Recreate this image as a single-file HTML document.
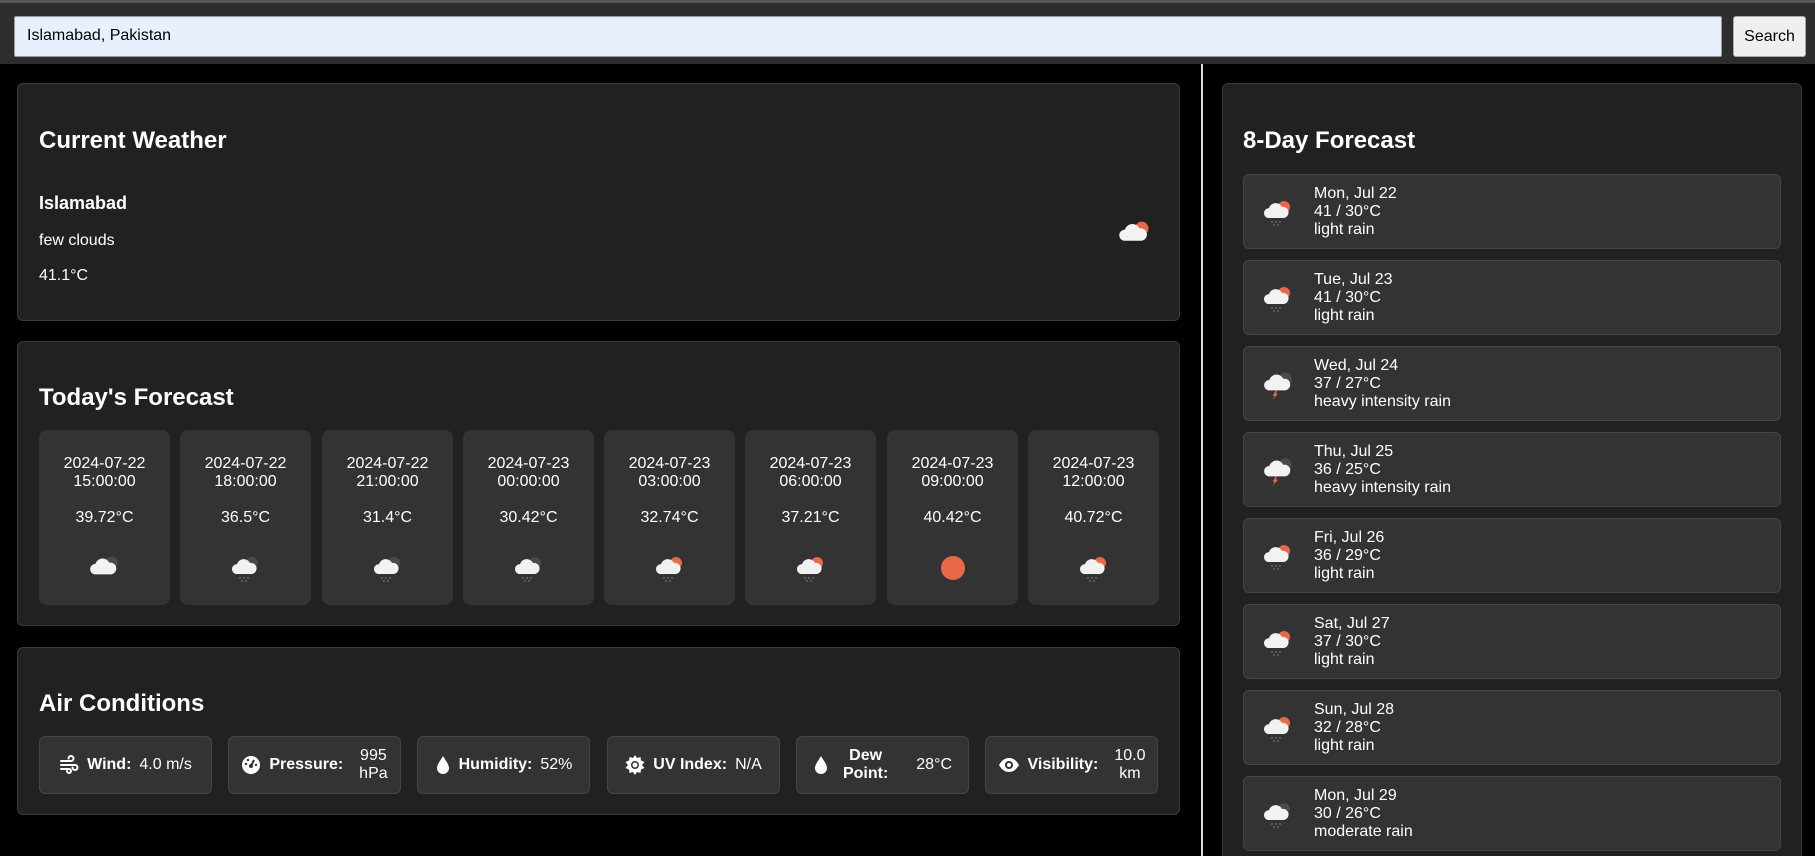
<!DOCTYPE html>
<html style="width:1815px;height:856px;overflow:hidden"><head><meta charset="utf-8">
<style>
*{box-sizing:border-box;margin:0;padding:0}
body{width:1815px;height:856px;background:#000;font-family:"Liberation Sans",Arial,sans-serif;color:#fff;position:relative;overflow:hidden;font-size:16px}
.top{position:absolute;left:0;top:0;width:1815px;height:64px;background:#2d2d2d;border-top:3px solid #555}
.inp{position:absolute;left:14px;top:13px;width:1708px;height:41px;background:#e8f0fe;border:1px solid #999;border-radius:2px;color:#000;font-size:16px;padding:10px 12px}
.btn{position:absolute;left:1733px;top:13px;width:73px;height:41px;background:#efefef;border:1px solid #aaa;border-radius:3px;color:#000;font-size:16px;text-align:center;line-height:39px}
.div{position:absolute;left:1201px;top:64px;width:2px;height:792px;background:#ddd}
.card{position:absolute;background:#212121;border:1px solid #3a3a3a;border-radius:6px}
h2{position:absolute;font-size:24px;font-weight:bold}
.hb{position:absolute;top:430px;width:131px;height:175px;background:#333;border-radius:8px;text-align:center;font-size:16px;line-height:18px}
.ab{position:absolute;top:736px;width:173px;height:58px;background:#333;border:1px solid #444;border-radius:6px;display:flex;align-items:center;justify-content:center;gap:8px;font-size:16px;line-height:18px}
.ab b{text-align:center}
.ab span{text-align:center}
.fi{position:absolute;left:1243px;width:538px;height:75px;background:#333;border:1px solid #444;border-radius:6px;font-size:16px;line-height:18px}
.fi .t{position:absolute;left:70px;top:10px}
.fi svg{position:absolute;left:18px;top:20px}
</style></head><body>
<svg width="0" height="0" style="position:absolute">
<defs>
<g id="cl"><path d="M6 22a5 5 0 0 1 1-9.9A7 7 0 0 1 20 11a5 5 0 0 1 2 11z" fill="#f2f2f2"/></g>
<g id="sun"><circle cx="22" cy="11" r="6" fill="#e8694a"/></g>
<g id="moon"><circle cx="22" cy="11" r="6" fill="#4a4a4a"/></g>
<g id="rain" fill="#666"><circle cx="10" cy="26" r="1"/><circle cx="14" cy="26" r="1"/><circle cx="18" cy="26" r="1"/><circle cx="12" cy="29" r="1"/><circle cx="16" cy="29" r="1"/></g>
</defs></svg>

<div class="top"><div class="inp">Islamabad, Pakistan</div><div class="btn">Search</div></div>
<div class="div"></div>

<div class="card" style="left:17px;top:83px;width:1163px;height:238px">
<h2 style="left:21px;top:43px">Current Weather</h2>
<div style="position:absolute;left:21px;top:109px;font-weight:bold;font-size:18px">Islamabad</div>
<div style="position:absolute;left:21px;top:148px">few clouds</div>
<div style="position:absolute;left:21px;top:183px">41.1°C</div>
<svg style="position:absolute;left:1099px;top:132px" width="36" height="36" viewBox="0 0 32 32"><use href="#sun"/><use href="#cl"/></svg>
</div>

<div class="card" style="left:17px;top:341px;width:1163px;height:285px">
<h2 style="left:21px;top:42px">Today's Forecast</h2>
</div>
<div class="hb" style="left:39px"><div style="margin-top:25px">2024-07-22<br>15:00:00</div><div style="margin-top:18px">39.72°C</div><svg style="margin-top:24px" width="36" height="34" viewBox="0 0 32 32"><use href="#moon"/><use href="#cl"/></svg></div>
<div class="hb" style="left:180px"><div style="margin-top:25px">2024-07-22<br>18:00:00</div><div style="margin-top:18px">36.5°C</div><svg style="margin-top:24px" width="32" height="34" viewBox="0 0 32 32"><use href="#moon"/><use href="#cl"/><use href="#rain"/></svg></div>
<div class="hb" style="left:322px"><div style="margin-top:25px">2024-07-22<br>21:00:00</div><div style="margin-top:18px">31.4°C</div><svg style="margin-top:24px" width="32" height="34" viewBox="0 0 32 32"><use href="#moon"/><use href="#cl"/><use href="#rain"/></svg></div>
<div class="hb" style="left:463px"><div style="margin-top:25px">2024-07-23<br>00:00:00</div><div style="margin-top:18px">30.42°C</div><svg style="margin-top:24px" width="32" height="34" viewBox="0 0 32 32"><use href="#moon"/><use href="#cl"/><use href="#rain"/></svg></div>
<div class="hb" style="left:604px"><div style="margin-top:25px">2024-07-23<br>03:00:00</div><div style="margin-top:18px">32.74°C</div><svg style="margin-top:24px" width="32" height="34" viewBox="0 0 32 32"><use href="#sun"/><use href="#cl"/><use href="#rain"/></svg></div>
<div class="hb" style="left:745px"><div style="margin-top:25px">2024-07-23<br>06:00:00</div><div style="margin-top:18px">37.21°C</div><svg style="margin-top:24px" width="32" height="34" viewBox="0 0 32 32"><use href="#sun"/><use href="#cl"/><use href="#rain"/></svg></div>
<div class="hb" style="left:887px"><div style="margin-top:25px">2024-07-23<br>09:00:00</div><div style="margin-top:18px">40.42°C</div><svg style="margin-top:26px" width="30" height="30" viewBox="0 0 30 30"><circle cx="15" cy="15" r="12" fill="#e8694a"/></svg></div>
<div class="hb" style="left:1028px"><div style="margin-top:25px">2024-07-23<br>12:00:00</div><div style="margin-top:18px">40.72°C</div><svg style="margin-top:24px" width="32" height="34" viewBox="0 0 32 32"><use href="#sun"/><use href="#cl"/><use href="#rain"/></svg></div>

<div class="card" style="left:17px;top:647px;width:1163px;height:168px">
<h2 style="left:21px;top:42px">Air Conditions</h2>
</div>
<div class="ab" style="left:39px"><svg width="20" height="20" viewBox="0 0 20 20" fill="none" stroke="#fff" stroke-width="2" stroke-linecap="round"><path d="M2 6h10a2.5 2.5 0 1 0-2.5-2.5M2 10h14a2.5 2.5 0 1 1-2.5 2.5M2 14h8a2 2 0 1 1-2 2"/></svg><b>Wind:</b><span>4.0 m/s</span></div>
<div class="ab" style="left:228px"><svg width="20" height="20" viewBox="0 0 20 20"><circle cx="10" cy="10" r="9" fill="#fff"/><path d="M10 11L13 5" stroke="#333" stroke-width="2"/><circle cx="10" cy="11" r="2" fill="#333"/><circle cx="5" cy="9" r="1.2" fill="#333"/><circle cx="7" cy="5" r="1.2" fill="#333"/><circle cx="15" cy="10" r="1.2" fill="#333"/></svg><b>Pressure:</b><span style="margin-left:8px">995<br>hPa</span></div>
<div class="ab" style="left:417px"><svg width="16" height="20" viewBox="0 0 16 20"><path d="M8 1C5 6 2 10 2 13a6 6 0 0 0 12 0c0-3-3-7-6-12z" fill="#fff"/></svg><b>Humidity:</b><span>52%</span></div>
<div class="ab" style="left:607px"><svg width="20" height="20" viewBox="0 0 20 20"><path d="M10 0l2 3 3.5-1 .5 3.5L19.5 7 17 10l2.5 3-3.5 1.5-.5 3.5-3.5-1L10 20l-2-3-3.5 1-.5-3.5L.5 13 3 10 .5 7 4 5.5 4.5 2 8 3z" fill="#fff"/><circle cx="10" cy="10" r="4" fill="#333"/><circle cx="10" cy="10" r="2.5" fill="#fff"/></svg><b>UV Index:</b><span>N/A</span></div>
<div class="ab" style="left:796px;gap:14px"><svg width="16" height="20" viewBox="0 0 16 20"><path d="M8 1C5 6 2 10 2 13a6 6 0 0 0 12 0c0-3-3-7-6-12z" fill="#fff"/></svg><b>Dew<br>Point:</b><span style="margin-left:14px">28°C</span></div>
<div class="ab" style="left:985px"><svg width="22" height="16" viewBox="0 0 22 16"><path d="M1 8C4 3 7 1 11 1s7 2 10 7c-3 5-6 7-10 7S4 13 1 8z" fill="#fff"/><circle cx="11" cy="8" r="4" fill="#333"/><circle cx="11" cy="8" r="2" fill="#fff"/></svg><b>Visibility:</b><span style="margin-left:8px">10.0<br>km</span></div>

<div class="card" style="left:1222px;top:83px;width:580px;height:780px">
<h2 style="left:20px;top:43px">8-Day Forecast</h2>
</div>
<div class="fi" style="top:174px"><svg width="32" height="34" viewBox="0 0 32 32"><use href="#sun"/><use href="#cl"/><use href="#rain"/></svg><div class="t">Mon, Jul 22<br>41 / 30°C<br>light rain</div></div>
<div class="fi" style="top:260px"><svg width="32" height="34" viewBox="0 0 32 32"><use href="#sun"/><use href="#cl"/><use href="#rain"/></svg><div class="t">Tue, Jul 23<br>41 / 30°C<br>light rain</div></div>
<div class="fi" style="top:346px"><svg width="34" height="34" viewBox="0 0 32 32"><use href="#moon"/><use href="#cl"/><path d="M13 22l-3 5h2l-2 4 5-6h-2l1-3z" fill="#e8694a"/></svg><div class="t">Wed, Jul 24<br>37 / 27°C<br>heavy intensity rain</div></div>
<div class="fi" style="top:432px"><svg width="34" height="34" viewBox="0 0 32 32"><use href="#moon"/><use href="#cl"/><path d="M13 22l-3 5h2l-2 4 5-6h-2l1-3z" fill="#e8694a"/></svg><div class="t">Thu, Jul 25<br>36 / 25°C<br>heavy intensity rain</div></div>
<div class="fi" style="top:518px"><svg width="32" height="34" viewBox="0 0 32 32"><use href="#sun"/><use href="#cl"/><use href="#rain"/></svg><div class="t">Fri, Jul 26<br>36 / 29°C<br>light rain</div></div>
<div class="fi" style="top:604px"><svg width="32" height="34" viewBox="0 0 32 32"><use href="#sun"/><use href="#cl"/><use href="#rain"/></svg><div class="t">Sat, Jul 27<br>37 / 30°C<br>light rain</div></div>
<div class="fi" style="top:690px"><svg width="32" height="34" viewBox="0 0 32 32"><use href="#sun"/><use href="#cl"/><use href="#rain"/></svg><div class="t">Sun, Jul 28<br>32 / 28°C<br>light rain</div></div>
<div class="fi" style="top:776px"><svg width="32" height="34" viewBox="0 0 32 32"><use href="#moon"/><use href="#cl"/><use href="#rain"/></svg><div class="t">Mon, Jul 29<br>30 / 26°C<br>moderate rain</div></div>
</body></html>
